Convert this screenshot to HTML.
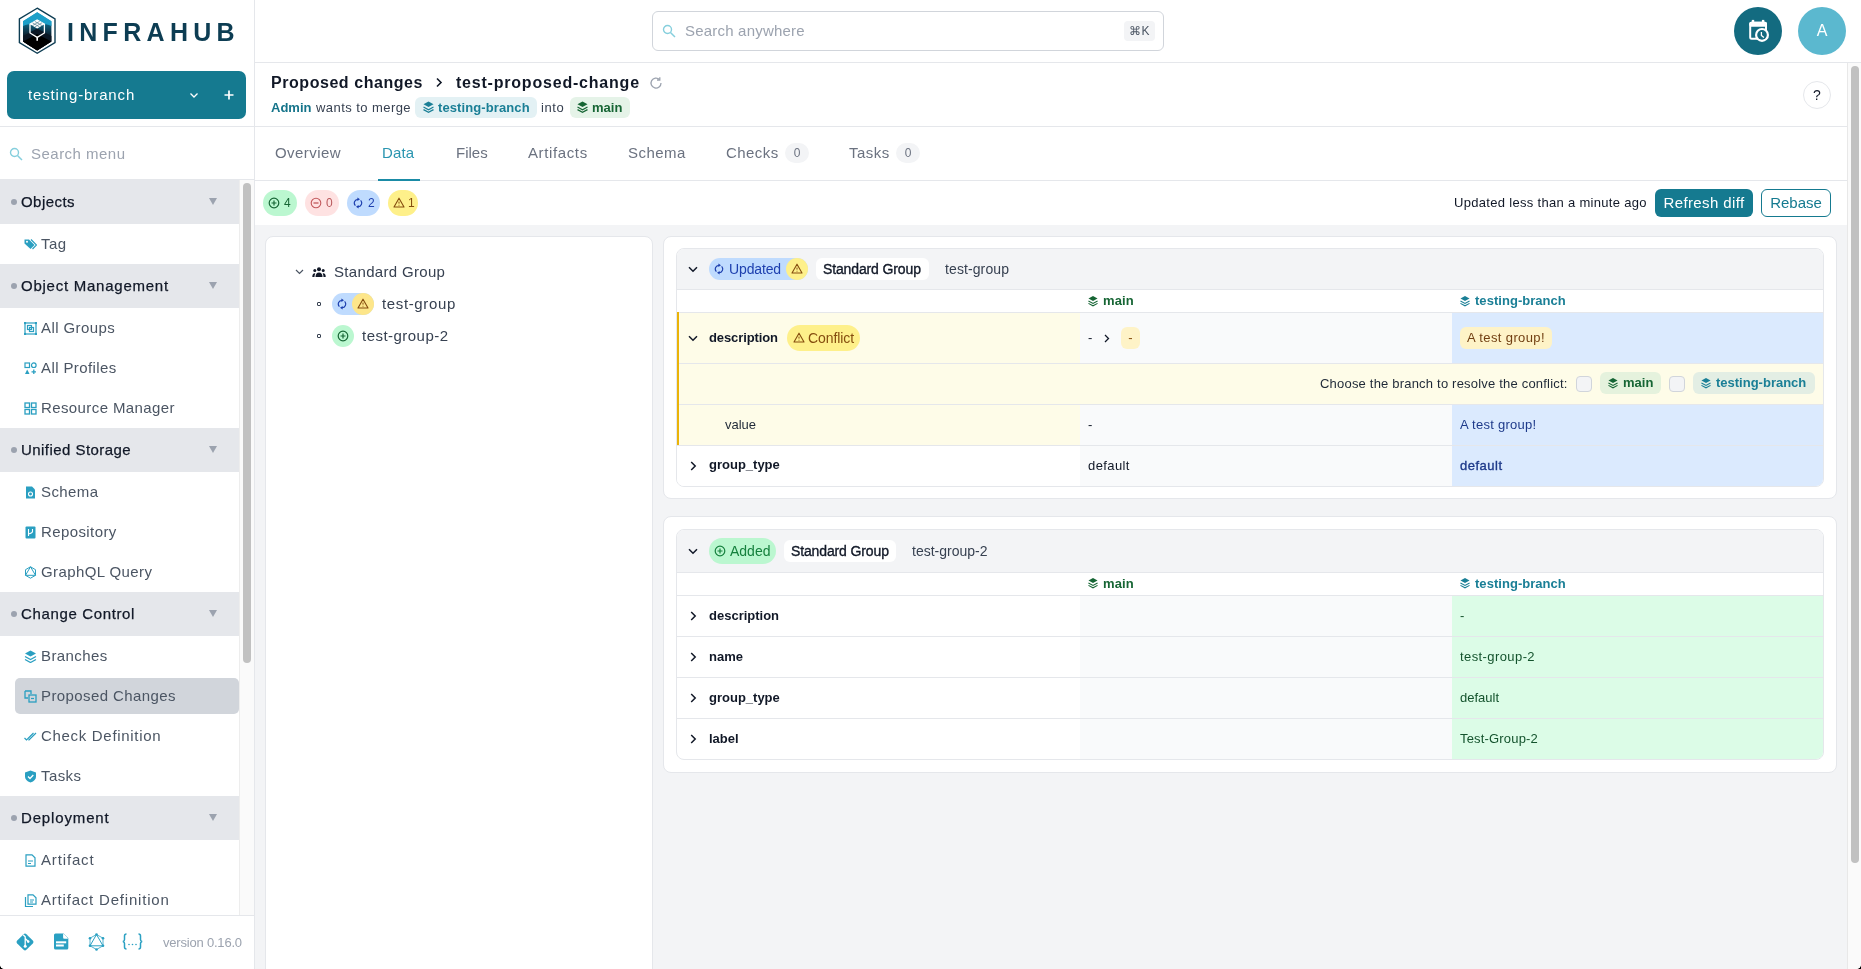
<!DOCTYPE html>
<html><head><meta charset="utf-8">
<style>
*{box-sizing:border-box;margin:0;padding:0}
html,body{width:1861px;height:969px;overflow:hidden;background:#fff;font-family:"Liberation Sans",sans-serif;color:#111827}
.a{position:absolute}
svg{display:block;position:absolute}
.tx{position:absolute;white-space:nowrap;will-change:transform}
/* sidebar */
#sb{position:absolute;left:0;top:0;width:255px;height:969px;background:#fff;border-right:1px solid #e5e7eb}
#nav{position:absolute;left:0;top:180px;width:239px;height:735px;overflow:hidden}
.hd{position:relative;height:44px;background:#e5e7eb}
.hd .dot{position:absolute;left:11px;top:19px;width:6px;height:6px;border-radius:3px;background:#9ca3af}
.hd .t{will-change:transform;position:absolute;left:21px;top:0;line-height:44px;font-size:15px;color:#111827;letter-spacing:.45px;-webkit-text-stroke:.25px #111827}
.hd .arr{position:absolute;left:209px;top:18px;width:0;height:0;border-left:4px solid transparent;border-right:4px solid transparent;border-top:7px solid #9ca3af}
.it{position:relative;height:40px}
.it svg{left:24px;top:14px;width:13px;height:13px}
.it .t{will-change:transform;position:absolute;left:41px;top:0;line-height:40px;font-size:15px;color:#4b5563;letter-spacing:.4px}
.it .bg{position:absolute;left:15px;top:2px;width:224px;height:36px;background:#d1d5db;border-radius:5px}
</style></head><body>

<!-- SIDEBAR -->
<div id="sb">
  <svg style="left:16px;top:6px" width="42" height="50" viewBox="0 0 42 50">
    <defs><linearGradient id="lg" x1="0" y1="0" x2="0" y2="1"><stop offset="0" stop-color="#1c9fc8"/><stop offset=".3" stop-color="#1a94bd"/><stop offset=".34" stop-color="#0f5a76"/><stop offset=".55" stop-color="#0c2c3e"/><stop offset=".7" stop-color="#0a1622"/><stop offset="1" stop-color="#000"/></linearGradient></defs>
    <path d="M21.2 2.2 L39 12.8 L39 36.6 L21.2 47.3 L3.4 36.6 L3.4 12.8 Z" fill="#fff" stroke="#0d3d53" stroke-width="1.4"/>
    <path d="M21.2 6.2 L35.4 15.2 L35.4 35.6 L21.2 44.4 L7 35.6 L7 15.2 Z" fill="url(#lg)"/>
    <path d="M7 15.2 L21.2 6.2 L35.4 15.2 L35.4 20 L21.2 14.5 L7 20 Z" fill="#1c9fc8"/>
    <path d="M7 30 L21.2 22.5 L35.4 30 L35.4 35.6 L21.2 44.4 L7 35.6 Z" fill="#0b1724"/>
    <path d="M7 35.6 L21.2 28 L35.4 35.6 L21.2 44.4 Z" fill="#000"/>
    <path d="M21.2 14 L28.4 18.2 L28.4 27 L21.2 31.4 L14 27 L14 18.2 Z" fill="none" stroke="#fff" stroke-width="1.3"/>
    <path d="M14 18.2 L21.2 14 L28.4 18.2 L21.2 22.4 Z" fill="#fff"/>
    <path d="M16.4 16.8 L23.6 21 M18.8 15.4 L26 19.6 M23.6 15.4 L16.4 19.6 M26 16.8 L18.8 21" stroke="#3a6b80" stroke-width=".6"/>
    <path d="M21.2 31.4 L21.2 34.8" stroke="#fff" stroke-width="1.6"/>
  </svg>
  <div class="tx" style="left:67px;top:18px;line-height:28px;font-weight:bold;font-size:25px;letter-spacing:5.3px;color:#0d3d53">INFRAHUB</div>
  <div class="a" style="left:7px;top:71px;width:239px;height:48px;background:#157a90;border-radius:7px"></div>
  <div class="tx" style="left:28px;top:71px;line-height:47px;font-size:15px;letter-spacing:.86px;color:#fff">testing-branch</div>
  <svg style="left:189px;top:91px" width="10" height="8" viewBox="0 0 10 8"><path d="M1.5 2.5 L5 6 L8.5 2.5" fill="none" stroke="#fff" stroke-width="1.3"/></svg>
  <svg style="left:224px;top:90px" width="10" height="10" viewBox="0 0 10 10"><path d="M5 0.5 V9.5 M0.5 5 H9.5" stroke="#fff" stroke-width="1.7"/></svg>
  <div class="a" style="left:0;top:126px;width:254px;height:1px;background:#e5e7eb"></div>
  <svg style="left:9px;top:147px" width="14" height="14" viewBox="0 0 14 14"><circle cx="5.5" cy="5.5" r="4" fill="none" stroke="#86cfdd" stroke-width="1.4"/><path d="M8.5 8.5 L13 13" stroke="#86cfdd" stroke-width="1.5"/></svg>
  <div class="tx" style="left:31px;top:127px;line-height:53px;font-size:15px;color:#9ca3af;letter-spacing:.48px">Search menu</div>
  <div class="a" style="left:0;top:179px;width:254px;height:1px;background:#e5e7eb"></div>
  <div id="nav">
    <div class="hd"><div class="dot"></div><div class="t">Objects</div><div class="arr"></div></div>
    <div class="it"><svg viewBox="0 0 13 13"><path d="M0.5 1.5 L5 1.5 L10.5 7 L6.5 11 L0.5 5.5 Z" fill="#2a9fc1"/><circle cx="3" cy="3.8" r="1" fill="#fff"/><path d="M7 1.5 L12.5 7 L8.5 11" fill="none" stroke="#2a9fc1" stroke-width="1.2"/></svg><div class="t">Tag</div></div>
    <div class="hd"><div class="dot"></div><div class="t" style="letter-spacing:.75px">Object Management</div><div class="arr"></div></div>
    <div class="it"><svg viewBox="0 0 13 13"><rect x="1" y="1" width="11" height="11" fill="none" stroke="#2a9fc1" stroke-width="1.2"/><rect x="3.5" y="3.5" width="4" height="4" fill="none" stroke="#2a9fc1" stroke-width="1.2"/><rect x="5.5" y="5.5" width="4" height="4" fill="none" stroke="#2a9fc1" stroke-width="1.2"/><circle cx="1" cy="1" r="1.2" fill="#2a9fc1"/><circle cx="12" cy="1" r="1.2" fill="#2a9fc1"/><circle cx="1" cy="12" r="1.2" fill="#2a9fc1"/><circle cx="12" cy="12" r="1.2" fill="#2a9fc1"/></svg><div class="t">All Groups</div></div>
    <div class="it"><svg viewBox="0 0 13 13"><rect x="1" y="1" width="4.5" height="4.5" fill="none" stroke="#2a9fc1" stroke-width="1.2"/><circle cx="9.8" cy="3.2" r="2.3" fill="none" stroke="#2a9fc1" stroke-width="1.2"/><path d="M3.2 7.5 L5.5 12 L1 12 Z" fill="#2a9fc1"/><path d="M9.8 7.5 V12 M7.5 9.8 H12" stroke="#2a9fc1" stroke-width="1.3"/></svg><div class="t">All Profiles</div></div>
    <div class="it"><svg viewBox="0 0 13 13"><rect x="1" y="1" width="4.5" height="4.5" fill="none" stroke="#2a9fc1" stroke-width="1.3"/><rect x="7.5" y="1" width="4.5" height="4.5" fill="none" stroke="#2a9fc1" stroke-width="1.3"/><rect x="1" y="7.5" width="4.5" height="4.5" fill="none" stroke="#2a9fc1" stroke-width="1.3"/><rect x="7.5" y="7.5" width="4.5" height="4.5" fill="none" stroke="#2a9fc1" stroke-width="1.3"/></svg><div class="t">Resource Manager</div></div>
    <div class="hd"><div class="dot"></div><div class="t">Unified Storage</div><div class="arr"></div></div>
    <div class="it"><svg viewBox="0 0 13 13"><path d="M2 0.5 H8 L11 3.5 V12.5 H2 Z" fill="#2a9fc1"/><circle cx="6.5" cy="8" r="2" fill="none" stroke="#fff" stroke-width="1.1"/></svg><div class="t">Schema</div></div>
    <div class="it"><svg viewBox="0 0 13 13"><rect x="1.5" y="0.5" width="10" height="12" rx="1" fill="#2a9fc1"/><path d="M4.5 3 V10 M8.5 3 V5.5 Q8.5 7 4.5 8" fill="none" stroke="#fff" stroke-width="1.1"/></svg><div class="t">Repository</div></div>
    <div class="it"><svg viewBox="0 0 13 13"><path d="M6.5 0.8 L11.5 3.7 V9.3 L6.5 12.2 L1.5 9.3 V3.7 Z M6.5 0.8 L11.5 9.3 H1.5 Z" fill="none" stroke="#2a9fc1" stroke-width="1"/></svg><div class="t">GraphQL Query</div></div>
    <div class="hd"><div class="dot"></div><div class="t" style="letter-spacing:.64px">Change Control</div><div class="arr"></div></div>
    <div class="it"><svg viewBox="0 0 13 13"><path d="M6.5 0.5 L12 3.5 L6.5 6.5 L1 3.5 Z" fill="#2a9fc1"/><path d="M1 6.5 L6.5 9.5 L12 6.5 M1 9.5 L6.5 12.5 L12 9.5" fill="none" stroke="#2a9fc1" stroke-width="1.3"/></svg><div class="t">Branches</div></div>
    <div class="it"><div class="bg"></div><svg viewBox="0 0 13 13"><path d="M1 1 H7 V4 M1 1 V8 H4" fill="none" stroke="#2a9fc1" stroke-width="1.3"/><rect x="5" y="5" width="7" height="7" fill="none" stroke="#2a9fc1" stroke-width="1.3"/><path d="M7 8.5 H10" stroke="#2a9fc1" stroke-width="1.2"/></svg><div class="t">Proposed Changes</div></div>
    <div class="it"><svg viewBox="0 0 13 13"><path d="M0.5 8 L2.5 10 L7 5.5 M4.5 9.5 L5 10 L12 3 M4 8.5 L9.5 3" fill="none" stroke="#2a9fc1" stroke-width="1.2"/></svg><div class="t" style="letter-spacing:.69px">Check Definition</div></div>
    <div class="it"><svg viewBox="0 0 13 13"><path d="M6.5 0.5 L12 2.5 V6.5 Q12 10.5 6.5 12.5 Q1 10.5 1 6.5 V2.5 Z" fill="#2a9fc1"/><path d="M4 6.5 L6 8.5 L9.3 5" fill="none" stroke="#fff" stroke-width="1.3"/></svg><div class="t">Tasks</div></div>
    <div class="hd"><div class="dot"></div><div class="t" style="letter-spacing:.85px">Deployment</div><div class="arr"></div></div>
    <div class="it"><svg viewBox="0 0 13 13"><path d="M2 0.8 H8 L11 3.8 V12.2 H2 Z" fill="none" stroke="#2a9fc1" stroke-width="1.2"/><path d="M4 7 H9 M4 9.5 H7" stroke="#2a9fc1" stroke-width="1.2"/></svg><div class="t" style="letter-spacing:.85px">Artifact</div></div>
    <div class="it"><svg viewBox="0 0 13 13"><path d="M4 0.8 H9 L12 3.8 V10.2 H4 Z" fill="none" stroke="#2a9fc1" stroke-width="1.2"/><path d="M1.5 3 V12.5 H9" fill="none" stroke="#2a9fc1" stroke-width="1.2"/><path d="M6 6 H10 M6 8 H9" stroke="#2a9fc1" stroke-width="1.1"/></svg><div class="t" style="letter-spacing:.8px">Artifact Definition</div></div>
  </div>
  <div class="a" style="left:239px;top:180px;width:15px;height:735px;background:#fafafa;border-left:1px solid #ededed"></div>
  <div class="a" style="left:243px;top:183px;width:8px;height:480px;background:#c1c1c1;border-radius:4px"></div>
  <div class="a" style="left:0;top:915px;width:254px;height:1px;background:#e5e7eb"></div>
  <svg style="left:16px;top:933px" width="18" height="18" viewBox="0 0 18 18"><path d="M7.6 1.2 Q9 -0.1 10.4 1.2 L16.8 7.6 Q18.1 9 16.8 10.4 L10.4 16.8 Q9 18.1 7.6 16.8 L1.2 10.4 Q-0.1 9 1.2 7.6 Z" fill="#2aa0c2"/><path d="M7.2 1.8 L9.2 3.8 V12.8 M9.2 5.5 L12 8.3" fill="none" stroke="#fff" stroke-width="1.3"/><circle cx="9.2" cy="13.2" r="1.5" fill="#fff"/><circle cx="12.2" cy="8.6" r="1.3" fill="#fff"/></svg>
  <svg style="left:54px;top:933px" width="15" height="17" viewBox="0 0 15 17"><path d="M1.5 0.5 H9.5 L14.3 5.3 V15 Q14.3 16.5 12.8 16.5 H1.5 Q0 16.5 0 15 V2 Q0 0.5 1.5 0.5 Z" fill="#2aa0c2"/><path d="M9.3 0.8 V4 Q9.3 5.5 10.8 5.5 H14" fill="#fff"/><path d="M9.3 0.8 L14 5.5 H9.3 Z" fill="#fff"/><rect x="2" y="8.3" width="10.2" height="2" fill="#fff"/><rect x="2" y="11.5" width="7.8" height="2" fill="#fff"/></svg>
  <svg style="left:88px;top:933px" width="17" height="18" viewBox="0 0 17 18"><path d="M8.5 1.5 L15 5.2 V12.8 L8.5 16.5 L2 12.8 V5.2 Z" fill="none" stroke="#2aa0c2" stroke-width=".8"/><path d="M8.5 1.5 L15 12.8 H2 Z" fill="none" stroke="#2aa0c2" stroke-width="1"/><circle cx="8.5" cy="1.5" r="1.3" fill="#2aa0c2"/><circle cx="15" cy="5.2" r="1.3" fill="#2aa0c2"/><circle cx="15" cy="12.8" r="1.3" fill="#2aa0c2"/><circle cx="8.5" cy="16.5" r="1.3" fill="#2aa0c2"/><circle cx="2" cy="12.8" r="1.3" fill="#2aa0c2"/><circle cx="2" cy="5.2" r="1.3" fill="#2aa0c2"/></svg>
  <svg style="left:122px;top:933px" width="21" height="17" viewBox="0 0 21 17"><path d="M4.5 1 Q2.5 1 2.5 3 V6.5 Q2.5 8.3 0.8 8.5 Q2.5 8.7 2.5 10.5 V14 Q2.5 16 4.5 16 M16.5 1 Q18.5 1 18.5 3 V6.5 Q18.5 8.3 20.2 8.5 Q18.5 8.7 18.5 10.5 V14 Q18.5 16 16.5 16" fill="none" stroke="#2aa0c2" stroke-width="1.5"/><circle cx="7" cy="11.5" r=".8" fill="#2aa0c2"/><circle cx="10.5" cy="11.5" r=".8" fill="#2aa0c2"/><circle cx="14" cy="11.5" r=".8" fill="#2aa0c2"/></svg>
  <div class="tx" style="left:163px;top:934px;line-height:18px;font-size:13px;color:#9ca3af;letter-spacing:-.2px">version 0.16.0</div>
</div>

<!-- TOP HEADER -->
<div class="a" style="left:255px;top:0;width:1606px;height:62px;background:#fff"></div>
<div class="a" style="left:255px;top:62px;width:1606px;height:1px;background:#e5e7eb"></div>
<div class="a" style="left:652px;top:11px;width:512px;height:40px;border:1px solid #d1d5db;border-radius:6px;background:#fff"></div>
<svg style="left:662px;top:24px" width="14" height="14" viewBox="0 0 14 14"><circle cx="5.5" cy="5.5" r="4" fill="none" stroke="#86cfdd" stroke-width="1.4"/><path d="M8.5 8.5 L13 13" stroke="#86cfdd" stroke-width="1.5"/></svg>
<div class="tx" style="left:685px;top:11px;line-height:40px;font-size:15px;color:#9ca3af;letter-spacing:.2px">Search anywhere</div>
<div class="a" style="left:1124px;top:21px;width:31px;height:20px;background:#f3f4f6;border-radius:4px"></div>
<div class="tx" style="left:1124px;top:21px;width:31px;line-height:20px;text-align:center;font-size:12px;color:#4b5563">⌘K</div>
<div class="a" style="left:1734px;top:7px;width:48px;height:48px;border-radius:24px;background:#136b80"></div>
<svg style="left:1745px;top:17px" width="26" height="26" viewBox="0 0 26 26"><rect x="5.2" y="5.8" width="15.8" height="15.9" rx="1.5" fill="none" stroke="#fff" stroke-width="2"/><rect x="4.2" y="4.8" width="17.8" height="5" rx="2" fill="#fff"/><rect x="6.8" y="2.9" width="2.4" height="3" fill="#fff"/><rect x="16.9" y="2.9" width="2.4" height="3" fill="#fff"/><circle cx="17" cy="17.9" r="7" fill="#fff"/><circle cx="17" cy="17.9" r="4.8" fill="#136b80"/><path d="M16.4 15 V18.4 L18.9 20.6" stroke="#fff" stroke-width="1.3" fill="none"/></svg>
<div class="a" style="left:1798px;top:7px;width:48px;height:48px;border-radius:24px;background:#5bb8cf"></div>
<div class="tx" style="left:1798px;top:7px;width:48px;line-height:48px;text-align:center;font-size:16px;color:#fff">A</div>

<!-- PAGE HEADER -->
<div class="a" style="left:255px;top:126px;width:1592px;height:1px;background:#e5e7eb"></div>
<div class="tx" style="left:271px;top:73px;line-height:20px;font-size:16px;font-weight:bold;color:#111827;letter-spacing:.55px">Proposed changes</div>
<svg style="left:435px;top:77px" width="8" height="11" viewBox="0 0 8 11"><path d="M2 1.5 L6 5.5 L2 9.5" fill="none" stroke="#111827" stroke-width="1.6"/></svg>
<div class="tx" style="left:456px;top:73px;line-height:20px;font-size:16px;font-weight:bold;color:#111827;letter-spacing:.79px">test-proposed-change</div>
<svg style="left:649px;top:76px" width="14" height="14" viewBox="0 0 14 14"><path d="M12 7 A5 5 0 1 1 10.5 3.5" fill="none" stroke="#9ca3af" stroke-width="1.3"/><path d="M10.8 1.2 V4 H8" fill="none" stroke="#9ca3af" stroke-width="1.3"/></svg>
<div class="tx" style="left:271px;top:98px;line-height:20px;font-size:13px;font-weight:bold;color:#15748a">Admin</div>
<div class="tx" style="left:316px;top:98px;line-height:20px;font-size:13px;color:#374151;letter-spacing:.44px">wants to merge</div>
<div class="a" style="left:415px;top:97px;width:122px;height:21px;border-radius:6px;background:#e3f1f4"></div>
<svg style="left:423px;top:101px" width="11" height="12" viewBox="0 0 11 12"><path d="M5.5 0.5 L10.5 3.2 L5.5 6 L0.5 3.2 Z" fill="#1a7f96"/><path d="M0.5 6 L5.5 8.7 L10.5 6 M0.5 8.6 L5.5 11.3 L10.5 8.6" fill="none" stroke="#1a7f96" stroke-width="1.2"/></svg>
<div class="tx" style="left:438px;top:97px;line-height:21px;font-size:13px;font-weight:bold;color:#1a7f96;letter-spacing:.1px">testing-branch</div>
<div class="tx" style="left:541px;top:98px;line-height:20px;font-size:13px;color:#374151;letter-spacing:.6px">into</div>
<div class="a" style="left:570px;top:97px;width:60px;height:21px;border-radius:6px;background:#e5f3e8"></div>
<svg style="left:577px;top:101px" width="11" height="12" viewBox="0 0 11 12"><path d="M5.5 0.5 L10.5 3.2 L5.5 6 L0.5 3.2 Z" fill="#166534"/><path d="M0.5 6 L5.5 8.7 L10.5 6 M0.5 8.6 L5.5 11.3 L10.5 8.6" fill="none" stroke="#166534" stroke-width="1.2"/></svg>
<div class="tx" style="left:592px;top:97px;line-height:21px;font-size:13px;font-weight:bold;color:#166534">main</div>
<div class="a" style="left:1803px;top:81px;width:28px;height:28px;border:1px solid #e5e7eb;border-radius:14px"></div>
<div class="tx" style="left:1803px;top:81px;width:28px;line-height:29px;text-align:center;font-size:14px;color:#111827">?</div>

<!-- TABS -->
<div class="a" style="left:255px;top:180px;width:1592px;height:1px;background:#e5e7eb"></div>
<div class="tx" style="left:275px;top:143px;line-height:20px;font-size:15px;color:#6b7280;letter-spacing:.44px">Overview</div>
<div class="tx" style="left:382px;top:143px;line-height:20px;font-size:15px;color:#2a95b0;letter-spacing:.15px">Data</div>
<div class="a" style="left:378px;top:179px;width:42px;height:2px;background:#1a8ba6"></div>
<div class="tx" style="left:456px;top:143px;line-height:20px;font-size:15px;color:#6b7280">Files</div>
<div class="tx" style="left:528px;top:143px;line-height:20px;font-size:15px;color:#6b7280;letter-spacing:.62px">Artifacts</div>
<div class="tx" style="left:628px;top:143px;line-height:20px;font-size:15px;color:#6b7280;letter-spacing:.45px">Schema</div>
<div class="tx" style="left:726px;top:143px;line-height:20px;font-size:15px;color:#6b7280;letter-spacing:.45px">Checks</div>
<div class="a" style="left:785px;top:143px;width:24px;height:20px;border-radius:10px;background:#f3f4f6"></div>
<div class="tx" style="left:785px;top:143px;width:24px;line-height:20px;text-align:center;font-size:12px;color:#6b7280">0</div>
<div class="tx" style="left:849px;top:143px;line-height:20px;font-size:15px;color:#6b7280;letter-spacing:.45px">Tasks</div>
<div class="a" style="left:896px;top:143px;width:24px;height:20px;border-radius:10px;background:#f3f4f6"></div>
<div class="tx" style="left:896px;top:143px;width:24px;line-height:20px;text-align:center;font-size:12px;color:#6b7280">0</div>

<!-- TOOLBAR -->
<div class="a" style="left:263px;top:190px;width:34px;height:26px;border-radius:13px;background:#bbf7d0"></div>
<svg style="left:268px;top:197px" width="12" height="12" viewBox="0 0 12 12"><circle cx="6" cy="6" r="4.8" fill="none" stroke="#166534" stroke-width="1.2"/><path d="M6 3.5 V8.5 M3.5 6 H8.5" stroke="#166534" stroke-width="1.2"/></svg>
<div class="tx" style="left:284px;top:193px;line-height:20px;font-size:12px;color:#166534">4</div>
<div class="a" style="left:305px;top:190px;width:34px;height:26px;border-radius:13px;background:#fee2e2"></div>
<svg style="left:310px;top:197px" width="12" height="12" viewBox="0 0 12 12"><circle cx="6" cy="6" r="4.8" fill="none" stroke="#c2585c" stroke-width="1.1"/><path d="M3.5 6 H8.5" stroke="#c2585c" stroke-width="1.3"/></svg>
<div class="tx" style="left:326px;top:193px;line-height:20px;font-size:12px;color:#b9595c">0</div>
<div class="a" style="left:347px;top:190px;width:33px;height:26px;border-radius:13px;background:#bfdbfe"></div>
<svg style="left:353px;top:197px" width="10" height="12" viewBox="0 0 10 12"><path d="M5 2.3 A3.7 3.7 0 0 0 2.4 8.6 M7.6 3.4 A3.7 3.7 0 0 1 5 9.7" fill="none" stroke="#1e40af" stroke-width="1.2"/><path d="M4.4 0.6 L7 2.3 L4.4 4 Z M5.6 8 L3 9.7 L5.6 11.4 Z" fill="#1e40af"/></svg>
<div class="tx" style="left:368px;top:193px;line-height:20px;font-size:12px;color:#1e40af">2</div>
<div class="a" style="left:388px;top:190px;width:30px;height:26px;border-radius:13px;background:#fef08a"></div>
<svg style="left:393px;top:197px" width="12" height="11" viewBox="0 0 12 11"><path d="M6 1.2 L11 10 H1 Z" fill="none" stroke="#854d0e" stroke-width="1.1" stroke-linejoin="round"/><path d="M6 4.6 V6.6 M6 7.8 V8.6" stroke="#854d0e" stroke-width="1"/></svg>
<div class="tx" style="left:408px;top:193px;line-height:20px;font-size:12px;color:#854d0e">1</div>
<div class="tx" style="left:1454px;top:193px;line-height:20px;font-size:13px;color:#111827;letter-spacing:.31px">Updated less than a minute ago</div>
<div class="a" style="left:1655px;top:189px;width:98px;height:28px;border-radius:6px;background:#157a90"></div>
<div class="tx" style="left:1655px;top:189px;width:98px;line-height:28px;text-align:center;font-size:15px;color:#fff;letter-spacing:.38px">Refresh diff</div>
<div class="a" style="left:1761px;top:189px;width:70px;height:28px;border-radius:6px;border:1px solid #157a90;background:#fff"></div>
<div class="tx" style="left:1761px;top:189px;width:70px;line-height:28px;text-align:center;font-size:15px;color:#157a90">Rebase</div>

<!-- CONTENT -->
<div class="a" style="left:255px;top:225px;width:1592px;height:744px;background:#f3f4f6"></div>
<div class="a" style="left:265px;top:236px;width:388px;height:760px;background:#fff;border:1px solid #e5e7eb;border-radius:8px"></div>
<svg style="left:295px;top:269px" width="9" height="6" viewBox="0 0 9 6"><path d="M1 1 L4.5 4.5 L8 1" fill="none" stroke="#4b5563" stroke-width="1.2"/></svg>
<svg style="left:312px;top:267px" width="14" height="11" viewBox="0 0 14 11"><circle cx="7" cy="2.3" r="2" fill="#111827"/><circle cx="2.8" cy="3.6" r="1.5" fill="#111827"/><circle cx="11.2" cy="3.6" r="1.5" fill="#111827"/><path d="M3.5 10 Q3.5 5.5 7 5.5 Q10.5 5.5 10.5 10 Z" fill="#111827"/><path d="M0.3 10 Q0.3 6.3 2.8 6.3 Q3.6 6.3 3.2 6.8 Q2.5 8 2.5 10 Z M13.7 10 Q13.7 6.3 11.2 6.3 Q10.4 6.3 10.8 6.8 Q11.5 8 11.5 10 Z" fill="#111827"/></svg>
<div class="tx" style="left:334px;top:262px;line-height:20px;font-size:15px;color:#374151;letter-spacing:.32px">Standard Group</div>
<div class="a" style="left:317px;top:302px;width:4px;height:4px;border:1px solid #374151;border-radius:1px"></div>
<div class="a" style="left:332px;top:293px;width:42px;height:22px;border-radius:11px;background:#bfdbfe"></div>
<div class="a" style="left:352px;top:293px;width:22px;height:22px;border-radius:11px;background:#fde68a"></div>
<svg style="left:337px;top:298px" width="10" height="12" viewBox="0 0 10 12"><path d="M5 2.3 A3.7 3.7 0 0 0 2.4 8.6 M7.6 3.4 A3.7 3.7 0 0 1 5 9.7" fill="none" stroke="#1e40af" stroke-width="1.2"/><path d="M4.4 0.6 L7 2.3 L4.4 4 Z M5.6 8 L3 9.7 L5.6 11.4 Z" fill="#1e40af"/></svg>
<svg style="left:357px;top:298px" width="12" height="11" viewBox="0 0 12 11"><path d="M6 1.2 L11 10 H1 Z" fill="none" stroke="#854d0e" stroke-width="1.1" stroke-linejoin="round"/><path d="M6 4.6 V6.6 M6 7.8 V8.6" stroke="#854d0e" stroke-width="1"/></svg>
<div class="tx" style="left:382px;top:294px;line-height:20px;font-size:15px;color:#374151;letter-spacing:.64px">test-group</div>
<div class="a" style="left:317px;top:334px;width:4px;height:4px;border:1px solid #374151;border-radius:1px"></div>
<div class="a" style="left:332px;top:325px;width:22px;height:22px;border-radius:11px;background:#bbf7d0"></div>
<svg style="left:337px;top:330px" width="12" height="12" viewBox="0 0 12 12"><circle cx="6" cy="6" r="4.8" fill="none" stroke="#166534" stroke-width="1.2"/><path d="M6 3.5 V8.5 M3.5 6 H8.5" stroke="#166534" stroke-width="1.2"/></svg>
<div class="tx" style="left:362px;top:326px;line-height:20px;font-size:15px;color:#374151;letter-spacing:.47px">test-group-2</div>

<!-- CARD 1 -->
<div class="a" style="left:663px;top:236px;width:1174px;height:263px;background:#fff;border:1px solid #e5e7eb;border-radius:8px"></div>
<div class="a" style="left:676px;top:248px;width:1148px;height:239px;background:#fff;border:1px solid #e5e7eb;border-radius:8px;overflow:hidden">
  <div class="a" style="left:0;top:0;width:1148px;height:41px;background:#f3f4f6;border-bottom:1px solid #e5e7eb"></div>
  <div class="a" style="left:0;top:63px;width:1148px;height:1px;background:#e5e7eb"></div>
  <!-- description row -->
  <div class="a" style="left:0;top:63px;width:403px;height:51px;background:#fefce8;border-top:1px solid #e5e7eb"></div>
  <div class="a" style="left:403px;top:63px;width:372px;height:51px;background:#f9fafb;border-top:1px solid #e5e7eb"></div>
  <div class="a" style="left:775px;top:63px;width:373px;height:51px;background:#dbeafe;border-top:1px solid #e5e7eb"></div>
  <!-- conflict row -->
  <div class="a" style="left:0;top:114px;width:1148px;height:41px;background:#fefce8;border-top:1px solid #e5e7eb"></div>
  <!-- value row -->
  <div class="a" style="left:0;top:155px;width:403px;height:41px;background:#fefce8;border-top:1px solid #e5e7eb"></div>
  <div class="a" style="left:403px;top:155px;width:372px;height:41px;background:#f9fafb;border-top:1px solid #e5e7eb"></div>
  <div class="a" style="left:775px;top:155px;width:373px;height:41px;background:#dbeafe;border-top:1px solid #e5e7eb"></div>
  <!-- group_type row -->
  <div class="a" style="left:0;top:196px;width:403px;height:41px;background:#fff;border-top:1px solid #e5e7eb"></div>
  <div class="a" style="left:403px;top:196px;width:372px;height:41px;background:#f9fafb;border-top:1px solid #e5e7eb"></div>
  <div class="a" style="left:775px;top:196px;width:373px;height:41px;background:#dbeafe;border-top:1px solid #e5e7eb"></div>
  <div class="a" style="left:0;top:63px;width:2px;height:133px;background:#eab308"></div>
</div>
<svg style="left:688px;top:266px" width="10" height="7" viewBox="0 0 10 7"><path d="M1 1.2 L5 5.2 L9 1.2" fill="none" stroke="#111827" stroke-width="1.5"/></svg>
<div class="a" style="left:709px;top:258px;width:99px;height:22px;border-radius:11px;background:#bfdbfe"></div>
<div class="a" style="left:786px;top:258px;width:22px;height:22px;border-radius:11px;background:#fef08a"></div>
<svg style="left:714px;top:263px" width="10" height="12" viewBox="0 0 10 12"><path d="M5 2.3 A3.7 3.7 0 0 0 2.4 8.6 M7.6 3.4 A3.7 3.7 0 0 1 5 9.7" fill="none" stroke="#1e40af" stroke-width="1.2"/><path d="M4.4 0.6 L7 2.3 L4.4 4 Z M5.6 8 L3 9.7 L5.6 11.4 Z" fill="#1e40af"/></svg>
<div class="tx" style="left:729px;top:259px;line-height:20px;font-size:14px;color:#1e40af;letter-spacing:-.13px">Updated</div>
<svg style="left:791px;top:263px" width="12" height="11" viewBox="0 0 12 11"><path d="M6 1.2 L11 10 H1 Z" fill="none" stroke="#854d0e" stroke-width="1.1" stroke-linejoin="round"/><path d="M6 4.6 V6.6 M6 7.8 V8.6" stroke="#854d0e" stroke-width="1"/></svg>
<div class="a" style="left:816px;top:258px;width:113px;height:22px;border-radius:6px;background:#fff"></div>
<div class="tx" style="left:823px;top:259px;line-height:20px;font-size:14px;color:#111827;letter-spacing:-.13px;-webkit-text-stroke:.35px #111827">Standard Group</div>
<div class="tx" style="left:945px;top:259px;line-height:20px;font-size:14px;color:#374151;letter-spacing:.1px">test-group</div>
<svg style="left:1088px;top:295px" width="10" height="12" viewBox="0 0 11 12"><path d="M5.5 0.5 L10.5 3.2 L5.5 6 L0.5 3.2 Z" fill="#166534"/><path d="M0.5 6 L5.5 8.7 L10.5 6 M0.5 8.6 L5.5 11.3 L10.5 8.6" fill="none" stroke="#166534" stroke-width="1.2"/></svg>
<div class="tx" style="left:1103px;top:290px;line-height:22px;font-size:13px;font-weight:bold;color:#166534;letter-spacing:.09px">main</div>
<svg style="left:1460px;top:295px" width="10" height="12" viewBox="0 0 11 12"><path d="M5.5 0.5 L10.5 3.2 L5.5 6 L0.5 3.2 Z" fill="#1a7f96"/><path d="M0.5 6 L5.5 8.7 L10.5 6 M0.5 8.6 L5.5 11.3 L10.5 8.6" fill="none" stroke="#1a7f96" stroke-width="1.2"/></svg>
<div class="tx" style="left:1475px;top:290px;line-height:22px;font-size:13px;font-weight:bold;color:#1a7f96;letter-spacing:.04px">testing-branch</div>
<!-- description -->
<svg style="left:688px;top:335px" width="10" height="7" viewBox="0 0 10 7"><path d="M1 1.2 L5 5.2 L9 1.2" fill="none" stroke="#111827" stroke-width="1.5"/></svg>
<div class="tx" style="left:709px;top:328px;line-height:20px;font-size:13px;font-weight:bold;color:#111827;letter-spacing:-.1px">description</div>
<div class="a" style="left:787px;top:325px;width:73px;height:26px;border-radius:13px;background:#fef08a"></div>
<svg style="left:793px;top:332px" width="12" height="11" viewBox="0 0 12 11"><path d="M6 1.2 L11 10 H1 Z" fill="none" stroke="#854d0e" stroke-width="1.1" stroke-linejoin="round"/><path d="M6 4.6 V6.6 M6 7.8 V8.6" stroke="#854d0e" stroke-width="1"/></svg>
<div class="tx" style="left:808px;top:328px;line-height:20px;font-size:14px;color:#854d0e;letter-spacing:-.08px">Conflict</div>
<div class="tx" style="left:1088px;top:328px;line-height:20px;font-size:13px;color:#111827">-</div>
<svg style="left:1104px;top:334px" width="6" height="9" viewBox="0 0 6 9"><path d="M1 1 L4.5 4.5 L1 8" fill="none" stroke="#111827" stroke-width="1.3"/></svg>
<div class="a" style="left:1121px;top:327px;width:19px;height:22px;border-radius:6px;background:#fef3c7"></div>
<div class="tx" style="left:1121px;top:328px;width:19px;text-align:center;line-height:20px;font-size:13px;color:#854d0e">-</div>
<div class="a" style="left:1460px;top:327px;width:92px;height:22px;border-radius:6px;background:#fef3c7"></div>
<div class="tx" style="left:1467px;top:328px;line-height:20px;font-size:13px;color:#713f12;letter-spacing:.38px">A test group!</div>
<!-- conflict row -->
<div class="tx" style="left:1320px;top:374px;line-height:20px;font-size:13px;color:#1f2937;letter-spacing:.2px">Choose the branch to resolve the conflict:</div>
<div class="a" style="left:1576px;top:376px;width:16px;height:16px;border-radius:4px;border:1px solid #d1d5db;background:#f3f4f6"></div>
<div class="a" style="left:1600px;top:372px;width:61px;height:22px;border-radius:6px;background:#e5f2dd"></div>
<svg style="left:1608px;top:377px" width="10" height="12" viewBox="0 0 11 12"><path d="M5.5 0.5 L10.5 3.2 L5.5 6 L0.5 3.2 Z" fill="#166534"/><path d="M0.5 6 L5.5 8.7 L10.5 6 M0.5 8.6 L5.5 11.3 L10.5 8.6" fill="none" stroke="#166534" stroke-width="1.2"/></svg>
<div class="tx" style="left:1623px;top:372px;line-height:22px;font-size:13px;font-weight:bold;color:#166534">main</div>
<div class="a" style="left:1669px;top:376px;width:16px;height:16px;border-radius:4px;border:1px solid #d1d5db;background:#f3f4f6"></div>
<div class="a" style="left:1693px;top:372px;width:122px;height:22px;border-radius:6px;background:#e3eee4"></div>
<svg style="left:1701px;top:377px" width="10" height="12" viewBox="0 0 11 12"><path d="M5.5 0.5 L10.5 3.2 L5.5 6 L0.5 3.2 Z" fill="#1a7f96"/><path d="M0.5 6 L5.5 8.7 L10.5 6 M0.5 8.6 L5.5 11.3 L10.5 8.6" fill="none" stroke="#1a7f96" stroke-width="1.2"/></svg>
<div class="tx" style="left:1716px;top:372px;line-height:22px;font-size:13px;font-weight:bold;color:#1a7f96">testing-branch</div>
<!-- value row -->
<div class="tx" style="left:725px;top:415px;line-height:20px;font-size:13px;color:#1f2937">value</div>
<div class="tx" style="left:1088px;top:415px;line-height:20px;font-size:13px;color:#111827">-</div>
<div class="tx" style="left:1460px;top:415px;line-height:20px;font-size:13px;color:#1e3a8a;letter-spacing:.27px">A test group!</div>
<!-- group_type row -->
<svg style="left:690px;top:461px" width="7" height="10" viewBox="0 0 7 10"><path d="M1.2 1 L5.2 5 L1.2 9" fill="none" stroke="#111827" stroke-width="1.5"/></svg>
<div class="tx" style="left:709px;top:455px;line-height:20px;font-size:13px;font-weight:bold;color:#111827">group_type</div>
<div class="tx" style="left:1088px;top:456px;line-height:20px;font-size:13px;color:#111827;letter-spacing:.4px">default</div>
<div class="tx" style="left:1460px;top:456px;line-height:20px;font-size:13px;color:#1e3a8a;letter-spacing:.5px;-webkit-text-stroke:.35px #1e3a8a">default</div>

<!-- CARD 2 -->
<div class="a" style="left:663px;top:516px;width:1174px;height:257px;background:#fff;border:1px solid #e5e7eb;border-radius:8px"></div>
<div class="a" style="left:676px;top:529px;width:1148px;height:231px;background:#fff;border:1px solid #e5e7eb;border-radius:8px;overflow:hidden">
  <div class="a" style="left:0;top:0;width:1148px;height:43px;background:#f3f4f6;border-bottom:1px solid #e5e7eb"></div>
  <div class="a" style="left:0;top:65px;width:1148px;height:1px;background:#e5e7eb"></div>
  <div class="a" style="left:403px;top:66px;width:372px;height:164px;background:#f9fafb"></div>
  <div class="a" style="left:775px;top:66px;width:373px;height:164px;background:#dcfce7"></div>
  <div class="a" style="left:0;top:106px;width:1148px;height:1px;background:#e5e7eb"></div>
  <div class="a" style="left:0;top:147px;width:1148px;height:1px;background:#e5e7eb"></div>
  <div class="a" style="left:0;top:188px;width:1148px;height:1px;background:#e5e7eb"></div>
</div>
<svg style="left:688px;top:548px" width="10" height="7" viewBox="0 0 10 7"><path d="M1 1.2 L5 5.2 L9 1.2" fill="none" stroke="#111827" stroke-width="1.5"/></svg>
<div class="a" style="left:709px;top:538px;width:67px;height:26px;border-radius:13px;background:#bbf7d0"></div>
<svg style="left:714px;top:545px" width="12" height="12" viewBox="0 0 12 12"><circle cx="6" cy="6" r="4.8" fill="none" stroke="#15803d" stroke-width="1.2"/><path d="M6 3.5 V8.5 M3.5 6 H8.5" stroke="#15803d" stroke-width="1.2"/></svg>
<div class="tx" style="left:730px;top:541px;line-height:20px;font-size:14px;color:#15803d">Added</div>
<div class="a" style="left:784px;top:540px;width:112px;height:22px;border-radius:6px;background:#fff"></div>
<div class="tx" style="left:791px;top:541px;line-height:20px;font-size:14px;color:#111827;letter-spacing:-.13px;-webkit-text-stroke:.35px #111827">Standard Group</div>
<div class="tx" style="left:912px;top:541px;line-height:20px;font-size:14px;color:#374151">test-group-2</div>
<svg style="left:1088px;top:577px" width="10" height="12" viewBox="0 0 11 12"><path d="M5.5 0.5 L10.5 3.2 L5.5 6 L0.5 3.2 Z" fill="#166534"/><path d="M0.5 6 L5.5 8.7 L10.5 6 M0.5 8.6 L5.5 11.3 L10.5 8.6" fill="none" stroke="#166534" stroke-width="1.2"/></svg>
<div class="tx" style="left:1103px;top:572px;line-height:23px;font-size:13px;font-weight:bold;color:#166534;letter-spacing:.09px">main</div>
<svg style="left:1460px;top:577px" width="10" height="12" viewBox="0 0 11 12"><path d="M5.5 0.5 L10.5 3.2 L5.5 6 L0.5 3.2 Z" fill="#1a7f96"/><path d="M0.5 6 L5.5 8.7 L10.5 6 M0.5 8.6 L5.5 11.3 L10.5 8.6" fill="none" stroke="#1a7f96" stroke-width="1.2"/></svg>
<div class="tx" style="left:1475px;top:572px;line-height:23px;font-size:13px;font-weight:bold;color:#1a7f96;letter-spacing:.04px">testing-branch</div>
<svg style="left:690px;top:611px" width="7" height="10" viewBox="0 0 7 10"><path d="M1.2 1 L5.2 5 L1.2 9" fill="none" stroke="#111827" stroke-width="1.5"/></svg>
<div class="tx" style="left:709px;top:606px;line-height:20px;font-size:13px;font-weight:bold;color:#111827">description</div>
<div class="tx" style="left:1460px;top:606px;line-height:20px;font-size:13px;color:#14532d">-</div>
<svg style="left:690px;top:652px" width="7" height="10" viewBox="0 0 7 10"><path d="M1.2 1 L5.2 5 L1.2 9" fill="none" stroke="#111827" stroke-width="1.5"/></svg>
<div class="tx" style="left:709px;top:647px;line-height:20px;font-size:13px;font-weight:bold;color:#111827">name</div>
<div class="tx" style="left:1460px;top:647px;line-height:20px;font-size:13px;color:#14532d;letter-spacing:.41px">test-group-2</div>
<svg style="left:690px;top:693px" width="7" height="10" viewBox="0 0 7 10"><path d="M1.2 1 L5.2 5 L1.2 9" fill="none" stroke="#111827" stroke-width="1.5"/></svg>
<div class="tx" style="left:709px;top:688px;line-height:20px;font-size:13px;font-weight:bold;color:#111827">group_type</div>
<div class="tx" style="left:1460px;top:688px;line-height:20px;font-size:13px;color:#14532d">default</div>
<svg style="left:690px;top:734px" width="7" height="10" viewBox="0 0 7 10"><path d="M1.2 1 L5.2 5 L1.2 9" fill="none" stroke="#111827" stroke-width="1.5"/></svg>
<div class="tx" style="left:709px;top:729px;line-height:20px;font-size:13px;font-weight:bold;color:#111827">label</div>
<div class="tx" style="left:1460px;top:729px;line-height:20px;font-size:13px;color:#14532d;letter-spacing:.18px">Test-Group-2</div>

<!-- SCROLLBAR -->
<div class="a" style="left:1847px;top:63px;width:14px;height:906px;background:#fafafa;border-left:1px solid #e8e8e8"></div>
<div class="a" style="left:1851px;top:66px;width:8px;height:797px;background:#c1c1c1;border-radius:4px"></div>
<div class="a" style="left:0;top:965px;width:4px;height:4px;background:radial-gradient(circle at 100% 0%,transparent 3.5px,#000 4.2px)"></div>
<div class="a" style="left:1857px;top:965px;width:4px;height:4px;background:radial-gradient(circle at 0% 0%,transparent 3.5px,#000 4.2px)"></div>
</body></html>
